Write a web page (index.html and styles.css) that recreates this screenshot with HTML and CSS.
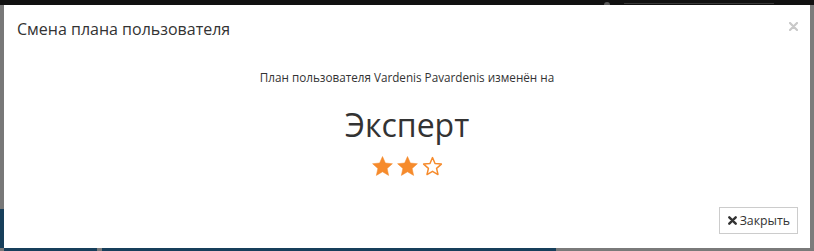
FILE: index.html
```html
<!DOCTYPE html>
<html lang="ru">
<head>
<meta charset="utf-8">
<title>Смена плана пользователя</title>
<link rel="stylesheet" href="styles.css">
</head>
<body>
<div class="page">
  <div class="topbar"><span class="topbar-icon"></span><span class="topbar-text"></span></div>
  <div class="middle">
    <div class="side side-left">
      <div class="side-gray"></div>
      <div class="side-blue"></div>
    </div>
    <div class="modal">
      <div class="modal-header">
        <h4 class="modal-title">Смена плана пользователя</h4>
        <button class="close" type="button" aria-label="Закрыть">
          <svg width="9" height="9" viewBox="0 0 9 9"><path d="M1 1L8 8M8 1L1 8" stroke="#c9c9c9" stroke-width="2.2" stroke-linecap="round"/></svg>
        </button>
      </div>
      <div class="modal-body">
        <p class="message">План пользователя Vardenis Pavardenis изменён на</p>
        <div class="plan">Эксперт</div>
        <div class="stars">
          <svg class="star" width="21" height="20" viewBox="0 0 24 23"><path d="M12 0.6L15.29 8.07L23.41 8.89L17.33 14.33L19.05 22.31L12 18.2L4.95 22.31L6.67 14.33L0.59 8.89L8.71 8.07Z" fill="#f68b2c" stroke="#f68b2c" stroke-width="0.6" stroke-linejoin="round"/></svg>
          <svg class="star" width="21" height="20" viewBox="0 0 24 23"><path d="M12 0.6L15.29 8.07L23.41 8.89L17.33 14.33L19.05 22.31L12 18.2L4.95 22.31L6.67 14.33L0.59 8.89L8.71 8.07Z" fill="#f68b2c" stroke="#f68b2c" stroke-width="0.6" stroke-linejoin="round"/></svg>
          <svg class="star" width="21" height="20" viewBox="0 0 24 23"><path d="M12 1.8L14.9 8.6L22.2 9.3L16.7 14.2L18.3 21.3L12 17.6L5.7 21.3L7.3 14.2L1.8 9.3L9.1 8.6Z" fill="none" stroke="#f68b2c" stroke-width="1.7" stroke-linejoin="round"/></svg>
        </div>
      </div>
      <div class="modal-footer">
        <button class="btn" type="button">
          <svg class="btn-icon" width="9" height="9" viewBox="0 0 9 9"><path d="M1.3 1.3L7.7 7.7M7.7 1.3L1.3 7.7" stroke="#333" stroke-width="2.4" stroke-linecap="round"/></svg>
          <span>Закрыть</span>
        </button>
      </div>
    </div>
    <div class="side side-right"></div>
  </div>
  <div class="bottombar">
    <span class="seg seg-gray w0"></span><span class="seg seg-blue w1"></span><span class="seg seg-gray w2"></span><span class="seg seg-blue w3"></span><span class="seg seg-gray w5"></span>
  </div>
</div>
</body>
</html>
```
FILE: styles.css
```css
html, body {
  margin: 0;
  padding: 0;
}
body {
  width: 814px;
  height: 251px;
  overflow: hidden;
  background: #111;
  font-family: "Open Sans", "Liberation Sans", sans-serif;
  color: #333;
}
.page {
  display: flex;
  flex-direction: column;
  width: 814px;
  height: 251px;
}
.topbar {
  height: 5px;
  background: #111;
  display: flex;
  align-items: flex-end;
  overflow: hidden;
}
.topbar-icon {
  width: 6px;
  height: 3px;
  margin-left: 604px;
  background: #5a5a5a;
  border-radius: 3px 3px 0 0;
}
.topbar-text {
  width: 150px;
  height: 1px;
  margin-left: 14px;
  margin-bottom: 1px;
  background: #3a3a3a;
}
.middle {
  display: flex;
  height: 243px;
}
.side {
  width: 4px;
  flex: none;
}
.side-left {
  display: flex;
  flex-direction: column;
}
.side-gray {
  height: 204px;
  background: #787878;
}
.side-blue {
  flex: 1;
  background: #173f5b;
}
.side-right {
  background: #7c7c7c;
}
.modal {
  width: 806px;
  flex: none;
  background: #fff;
  display: flex;
  flex-direction: column;
}
.modal-header {
  display: flex;
  justify-content: space-between;
  align-items: flex-start;
  padding: 13px 12px 13px 13px;
}
.modal-title {
  margin: 0;
  font-size: 16px;
  font-weight: 400;
  line-height: 22px;
  color: #333;
}
.close {
  margin: 4px 0 0 0;
  padding: 0;
  border: 0;
  background: none;
  width: 9px;
  height: 9px;
  display: flex;
}
.modal-body {
  text-align: center;
  padding-top: 16px;
}
.message {
  margin: 0;
  font-size: 11.7px;
  line-height: 16px;
  color: #333;
}
.plan {
  margin-top: 20px;
  font-size: 32px;
  line-height: 40px;
  color: #333;
}
.stars {
  margin-top: 11px;
  display: flex;
  justify-content: center;
  gap: 4px;
  height: 20px;
}
.star {
  display: block;
}
.modal-footer {
  margin-top: auto;
  display: flex;
  justify-content: flex-end;
  padding: 0 12px 14px 0;
}
.btn {
  display: flex;
  align-items: center;
  gap: 3px;
  height: 27px;
  padding: 0 7px 0 8px;
  border: 1px solid #ccc;
  background: #fff;
  font-family: "Open Sans", "Liberation Sans", sans-serif;
  font-size: 12.3px;
  color: #333;
  box-sizing: border-box;
}
.btn-icon {
  display: block;
}
.bottombar {
  flex: 1;
  display: flex;
}
.seg {
  display: block;
  height: 100%;
}
.seg-blue {
  background: #173f5b;
}
.seg-gray {
  background: #7a7a7a;
}
.w0 { width: 4px; }
.w1 { width: 93px; }
.w2 { width: 5px; }
.w3 { width: 454px; }
.w5 { flex: 1; }
```
